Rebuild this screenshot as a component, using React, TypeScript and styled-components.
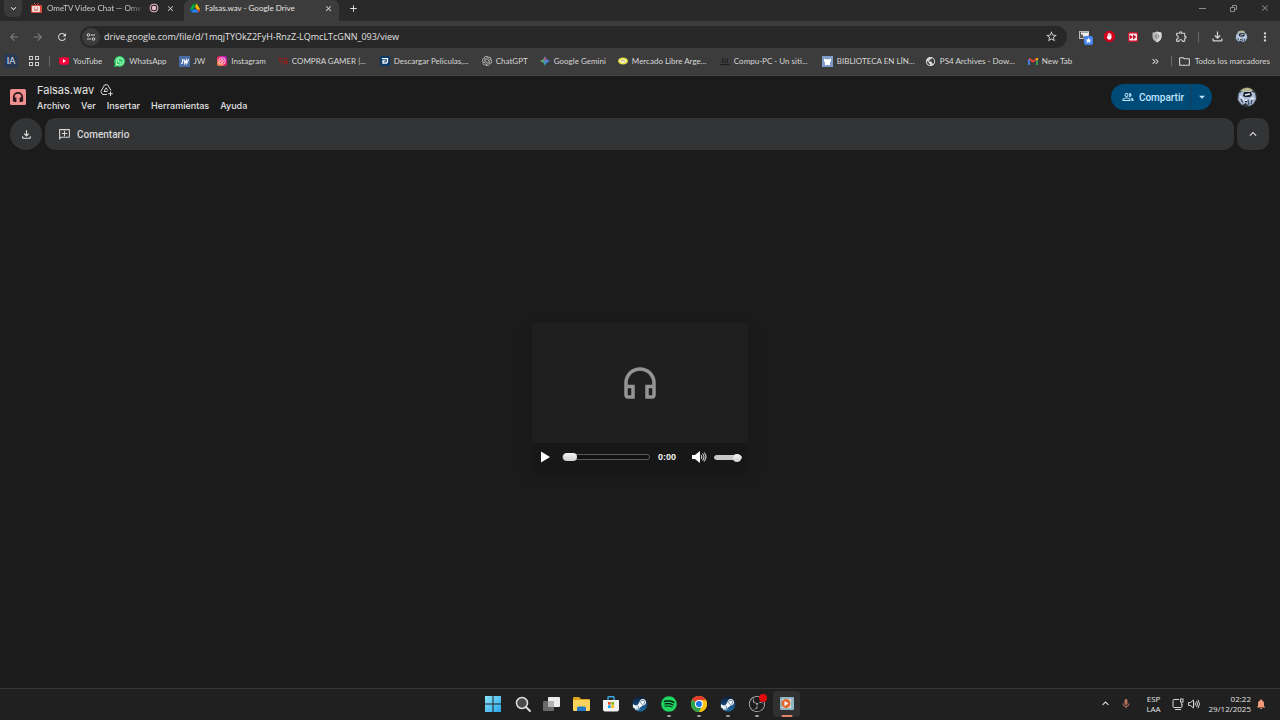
import React from "react";
import styled, { createGlobalStyle } from "styled-components";
import {
  MdArrowBack,
  MdArrowForward,
  MdArrowDropDown,
  MdClose,
  MdExpandLess,
  MdExpandMore,
  MdOutlineAddComment,
  MdOutlineExtension,
  MdOutlineFileDownload,
  MdOutlineFolder,
  MdOutlineHeadphones,
  MdOutlinePeopleAlt,
  MdMoreVert,
  MdRefresh,
  MdStarBorder,
  MdPublic,
  MdAdd,
  MdNotifications,
  MdKeyboardDoubleArrowRight,
  MdOutlineMic,
} from "react-icons/md";
import { FaSteamSymbol, FaSpotify, FaWhatsapp } from "react-icons/fa6";
import { SiOpenai, SiObsstudio } from "react-icons/si";

const chromeFont = `Lato, "Open Sans", sans-serif`;
const addressFont = `"Open Sans", "Noto Sans", sans-serif`;
const driveFont = `Roboto, Inter, sans-serif`;

const GlobalStyle = createGlobalStyle`
  * { box-sizing: border-box; }
  body { margin: 0; background: #1b1b1b; font-family: ${chromeFont}; }
  button { border: 0; padding: 0; background: none; color: inherit; font: inherit; cursor: pointer; }
  a { color: inherit; text-decoration: none; }
  svg { display: block; flex: none; }
`;

const Screen = styled.div`
  display: flex;
  flex-direction: column;
  min-height: 100vh;
  color: #e3e3e3;
`;

/* Browser frame */
const TabStrip = styled.div`
  display: flex;
  align-items: flex-start;
  height: 21px;
  background: #292929;
`;
const TabSearch = styled.button`
  display: grid;
  place-items: center;
  width: 18px;
  height: 17px;
  margin: 0 7px 0 4px;
  border-radius: 0 0 6px 6px;
  background: #3a3a3a;
`;
const Tab = styled.div<{ $active?: boolean }>`
  display: flex;
  align-items: center;
  gap: 5px;
  width: 155px;
  height: 21px;
  padding: ${(p) => (p.$active ? "0 5px 5px 6px" : "0 8px 5px 2px")};
  border-radius: 6px 6px 0 0;
  background: ${(p) => (p.$active ? "#3c3c3c" : "transparent")};
  color: ${(p) => (p.$active ? "#e4e4e4" : "#cccccc")};
  font-size: 8px;
  line-height: 16px;
`;
const TabTitle = styled.span<{ $fade?: boolean }>`
  flex: 1;
  white-space: nowrap;
  ${(p) => p.$fade && "mask-image: linear-gradient(90deg, #000 84%, transparent);"}
`;
const TabButton = styled.button`
  display: grid;
  place-items: center;
  width: 12px;
  height: 16px;
`;
const NewTab = styled(TabButton)`
  width: 28px;
`;
const WindowButtons = styled.div`
  display: flex;
  margin-left: auto;
  color: #8c8c8c;
`;
const WindowButton = styled(TabButton)`
  width: 31px;
`;

const Toolbar = styled.div`
  display: flex;
  align-items: center;
  height: 31px;
  padding: 0 3px 0 2px;
  background: #3c3c3c;
`;
const ToolButton = styled.button<{ $dim?: boolean }>`
  display: grid;
  place-items: center;
  width: 24px;
  height: 24px;
  color: ${(p) => (p.$dim ? "#808080" : "#d2d2d2")};
`;
const AddressBar = styled.div`
  display: flex;
  flex: 1;
  align-items: center;
  height: 22px;
  margin: 0 6px;
  padding: 0 4px 0 2px;
  border-radius: 11px;
  background: #282828;
`;
const SiteInfo = styled.button`
  display: grid;
  place-items: center;
  width: 18px;
  height: 18px;
  border-radius: 9px;
  background: #3c3c3c;
`;
const AddressInput = styled.input`
  flex: 1;
  min-width: 0;
  padding: 0 0 0 4px;
  border: 0;
  outline: 0;
  background: none;
  color: #e0e0e0;
  font-family: ${addressFont};
  font-size: 9px;
  line-height: 16px;
`;
const Separator = styled.span`
  width: 1px;
  height: 10px;
  margin: 0 6px 0 5px;
  background: #6a6a6a;
`;

const BookmarksBar = styled.nav`
  display: flex;
  align-items: center;
  height: 24px;
  padding: 0 10px 5px 4px;
  border-bottom: 1px solid #444444;
  background: #3c3c3c;
  color: #d8d8d8;
  font-size: 8px;
  line-height: 14px;
`;
const AiBadge = styled.a`
  width: 14px;
  border-radius: 3px;
  background: #2b3950;
  color: #d6e6ff;
  font-size: 9px;
  text-align: center;
`;
const AppsButton = styled.button`
  margin: 0 5px 0 11px;
`;
const Bookmarks = styled.div`
  display: flex;
  gap: 12px;
  margin-left: 3px;
`;
const Bookmark = styled.a`
  display: flex;
  align-items: center;
  gap: 4px;
  white-space: nowrap;
`;
const BookmarkLabel = styled.span<{ $cut?: boolean }>`
  width: ${(p) => (p.$cut ? "76px" : "auto")};
`;
const BookmarksEnd = styled.div`
  display: flex;
  align-items: center;
  margin-left: auto;
`;
const OverflowButton = styled.button`
  margin-right: 5px;
`;

/* Drive viewer */
const Viewer = styled.main`
  display: flex;
  flex: 1;
  flex-direction: column;
  background: #1b1b1b;
  font-family: ${driveFont};
`;
const Header = styled.header`
  display: flex;
  align-items: center;
  height: 42px;
  padding: 0 23px 0 10px;
`;
const TitleBlock = styled.div`
  padding-top: 2px;
  margin-left: 11px;
`;
const TitleRow = styled.div`
  display: flex;
  align-items: center;
  gap: 6px;
  height: 16px;
`;
const Title = styled.h1`
  margin: 0;
  color: #e6e6e6;
  font-family: Inter, sans-serif;
  font-size: 11px;
  font-weight: 400;
  line-height: 16px;
`;
const Menu = styled.nav`
  display: flex;
  gap: 11px;
  height: 16px;
`;
const MenuItem = styled.button`
  color: #e3e3e3;
  font-family: Inter, sans-serif;
  font-size: 9px;
  font-weight: 500;
  line-height: 16px;
`;
const Share = styled.div`
  display: flex;
  height: 26px;
  margin-left: auto;
  margin-right: 25px;
  border-radius: 13px;
  overflow: hidden;
  background: #004a77;
  color: #c2e7ff;
`;
const ShareMain = styled.button`
  display: flex;
  align-items: center;
  gap: 5px;
  padding: 0 6px 0 11px;
  font-size: 10px;
  font-weight: 500;
`;
const ShareMore = styled.button`
  display: grid;
  place-items: center;
  width: 22px;
  border-left: 1px solid #1b3c54;
`;
const ActionRow = styled.div`
  display: flex;
  gap: 3px;
  padding: 0 11px 0 10px;
`;
const RoundAction = styled.button<{ $radius: number }>`
  display: grid;
  place-items: center;
  width: 32px;
  height: 32px;
  border-radius: ${(p) => p.$radius}px;
  background: #333436;
`;
const ActionBar = styled.div`
  display: flex;
  flex: 1;
  height: 32px;
  padding: 0 13px;
  border-radius: 10px;
  background: #333436;
`;
const CommentButton = styled.button`
  display: flex;
  align-items: center;
  gap: 6px;
  color: #d6d6d6;
  font-size: 10px;
  font-weight: 500;
`;
const Flip = styled.span`
  transform: scaleX(-1);
`;
const Stage = styled.section`
  display: grid;
  flex: 1;
  place-items: center;
  padding-bottom: 44px;
`;
const Player = styled.div`
  width: 216px;
  box-shadow: 0 4px 10px #171717;
`;
const Cover = styled.div`
  display: grid;
  place-items: center;
  height: 120px;
  background: #1f1f1f;
  color: #949494;
`;
const Controls = styled.div`
  display: flex;
  align-items: center;
  height: 28px;
  padding: 0 6px 0 8px;
  background: #171717;
  color: #f2f2f2;
`;
const PlayButton = styled.button`
  margin-right: 12px;
`;
const Slider = styled.input<{ $kind: "seek" | "volume" }>`
  appearance: none;
  width: ${(p) => (p.$kind === "seek" ? 88 : 28)}px;
  height: 10px;
  margin: 0;
  background: none;
  &::-webkit-slider-runnable-track {
    height: ${(p) => (p.$kind === "seek" ? 6 : 5)}px;
    border: 1px solid ${(p) => (p.$kind === "seek" ? "#5c5c5c" : "#c8c8c8")};
    border-radius: 3px;
    background: ${(p) => (p.$kind === "seek" ? "#101010" : "#c8c8c8")};
  }
  &::-webkit-slider-thumb {
    appearance: none;
    width: ${(p) => (p.$kind === "seek" ? 14 : 8)}px;
    height: 8px;
    margin-top: -2px;
    border-radius: 4px;
    background: linear-gradient(#f4f4f4, #cfcfcf);
  }
`;
const Time = styled.time`
  flex: 1;
  margin-left: 8px;
  font-family: "Liberation Sans", sans-serif;
  font-size: 9px;
  font-weight: 700;
`;
const MuteButton = styled.button`
  margin-right: 7px;
`;

/* Windows taskbar */
const Taskbar = styled.footer`
  display: grid;
  grid-template-columns: 1fr 323px 1fr;
  height: 32px;
  border-top: 1px solid #363636;
  background: #202020;
`;
const Apps = styled.div`
  display: grid;
  grid-column: 2;
  grid-template-columns: repeat(11, 1fr);
  justify-items: center;
  align-items: start;
  padding-top: 2px;
`;
const AppButton = styled.button<{ $active?: boolean }>`
  position: relative;
  display: grid;
  place-items: center;
  width: 27px;
  height: 26px;
  border-radius: 3px;
  background: ${(p) => (p.$active ? "#303030" : "transparent")};
`;
const Running = styled.span<{ $active?: boolean }>`
  position: absolute;
  bottom: 0;
  left: 50%;
  width: ${(p) => (p.$active ? 11 : 4)}px;
  height: 2px;
  border-radius: 1px;
  transform: translateX(-50%);
  background: ${(p) => (p.$active ? "#e8836a" : "#9a9a9a")};
`;
const Tray = styled.div`
  display: flex;
  align-items: center;
  justify-content: flex-end;
  padding: 0 13px 2px 0;
  font-family: ${addressFont};
  font-size: 8px;
  line-height: 10px;
`;
const TrayIcon = styled.button`
  display: grid;
  place-items: center;
  width: 20px;
  height: 24px;
`;
const TrayGroup = styled.div`
  display: flex;
  gap: 4px;
`;
const Language = styled.button`
  width: 36px;
  text-align: center;
`;
const Clock = styled.button`
  margin: 0 4px 0 9px;
  text-align: right;
`;

/* Icons */
const Camera = () => (
  <svg width="11" height="11" viewBox="0 0 11 11">
    <rect x="0" y="2" width="11" height="8" rx="1" fill="#d9483f" />
    <path d="M3 0l2 2M8 0L6 2" stroke="#d9483f" />
    <rect x="1" y="3" width="8" height="6" rx="1" fill="#f4dcd6" />
    <path d="M3 5h1M6 5h1M3 7h4" stroke="#b8574c" />
  </svg>
);
const DriveLogo = () => (
  <svg width="10" height="10" viewBox="0 0 87 78">
    <path d="M6.6 66.85l3.85 6.65c.8 1.4 1.95 2.5 3.3 3.3L27.5 53H0c0 1.55.4 3.1 1.2 4.5z" fill="#0066da" />
    <path d="M43.65 25L29.9 1.2c-1.35.8-2.5 1.9-3.3 3.3L1.2 48.5A9 9 0 000 53h27.5z" fill="#00ac47" />
    <path d="M73.55 76.8c1.35-.8 2.5-1.9 3.3-3.3l9.25-16c.8-1.4 1.2-2.95 1.2-4.5H59.8l5.85 11.5z" fill="#ea4335" />
    <path d="M43.65 25L57.4 1.2C56.05.4 54.5 0 52.9 0H34.4c-1.6 0-3.15.45-4.5 1.2z" fill="#00832d" />
    <path d="M59.8 53H27.5L13.75 76.8c1.35.8 2.9 1.2 4.5 1.2h50.8c1.6 0 3.15-.45 4.5-1.2z" fill="#2684fc" />
    <path d="M73.4 26.5L60.7 4.5c-.8-1.4-1.95-2.5-3.3-3.3L43.65 25 59.8 53h27.45c0-1.55-.4-3.1-1.2-4.5z" fill="#ffba00" />
  </svg>
);
const AddToDrive = () => (
  <svg width="13" height="12" viewBox="0 0 13 12" fill="none" stroke="#d8d8d8" strokeLinejoin="round">
    <path d="M7 10.500H2.500L.8 7.500 4.600.8h3L11 6.500" />
    <path d="M7.500 7.500H4L6.100 3.800 7.800 6.500" />
    <path d="M10.500 7.500v4.500M8.200 9.700h4.600" />
  </svg>
);
const Recording = () => (
  <svg width="10" height="10" viewBox="0 0 10 10">
    <circle cx="5" cy="5" r="4" fill="none" stroke="#e6b8c4" />
    <circle cx="5" cy="5" r="2.3" fill="#e6b8c4" />
  </svg>
);
const Tune = () => (
  <svg width="10" height="10" viewBox="0 0 10 10" fill="none" stroke="#d8d8d8">
    <circle cx="2.5" cy="3" r="1.3" />
    <path d="M5 3h4M1 7h4" />
    <circle cx="7.5" cy="7" r="1.3" />
  </svg>
);
const AppsGrid = () => (
  <svg width="10" height="10" viewBox="0 0 10 10" fill="none" stroke="#cfcfcf">
    <rect x=".5" y=".5" width="3" height="3" />
    <rect x="6.5" y=".5" width="3" height="3" />
    <rect x=".5" y="6.5" width="3" height="3" />
    <rect x="6.5" y="6.5" width="3" height="3" />
  </svg>
);
const YouTube = () => (
  <svg width="10" height="10" viewBox="0 0 10 10">
    <rect y="1.3" width="10" height="7.4" rx="2" fill="#f5033a" />
    <path d="M4 3.3v3.4L7 5z" fill="#fff" />
  </svg>
);
const WhatsApp = () => (
  <svg width="11" height="11" viewBox="0 0 11 11">
    <path d="M5.6 0a5.4 5.4 0 11-2.5 10.2L0 11l.9-3A5.4 5.4 0 015.6 0z" fill="#2bd366" />
    <FaWhatsapp x="1.2" y="1" size={9} color="#fff" />
  </svg>
);
const JW = () => (
  <svg width="11" height="11" viewBox="0 0 11 11">
    <rect width="11" height="11" fill="#4a6da7" />
    <path d="M3.6 3v3.5q0 1-1.6 1M5 3l.8 4.5L7.3 4l.5 3.500L9.600 3" fill="none" stroke="#fff" strokeWidth="1.1" />
  </svg>
);
const Instagram = () => (
  <svg width="10" height="10" viewBox="0 0 10 10">
    <defs>
      <linearGradient id="ig" x1="0" y1="1" x2="1" y2="0">
        <stop offset="0" stopColor="#ffc03a" />
        <stop offset=".45" stopColor="#f2215f" />
        <stop offset="1" stopColor="#b01be0" />
      </linearGradient>
    </defs>
    <rect width="10" height="10" rx="2.5" fill="url(#ig)" />
    <rect x="2" y="2" width="6" height="6" rx="1.800" fill="none" stroke="#fff" strokeWidth=".8" />
    <circle cx="5" cy="5" r="1.4" fill="none" stroke="#fff" strokeWidth=".8" />
  </svg>
);
const CompraGamer = () => (
  <svg width="10" height="10" viewBox="0 0 10 10" fill="none" stroke="#8e2323" strokeWidth="1.3">
    <path d="M0 2l3 1 2-1M1 4l2 2h2M9.500 3H6.500v4.500H9V5.500H7.500" />
  </svg>
);
const Download = () => (
  <svg width="10" height="10" viewBox="0 0 10 10">
    <rect width="10" height="10" rx="1" fill="#0b3a68" />
    <path d="M2 2.700h5.500V5q0 2.200-2.500 2.200H3V4.800h2.500" fill="none" stroke="#fff" strokeWidth="1.3" />
  </svg>
);
const Gemini = () => (
  <svg width="10" height="10" viewBox="0 0 10 10">
    <defs>
      <linearGradient id="gem" x1="0" y1=".6" x2="1" y2=".4">
        <stop offset="0" stopColor="#f5c531" />
        <stop offset=".3" stopColor="#3fae6c" />
        <stop offset=".55" stopColor="#4285f4" />
        <stop offset="1" stopColor="#4a8cf7" />
      </linearGradient>
    </defs>
    <path d="M5 0Q6 4 10 5 6 6 5 10 4 6 0 5 4 4 5 0z" fill="url(#gem)" />
    <path d="M5 0Q5.500 3 7 4L5 5 3.500 3.800Q4.700 2.500 5 0z" fill="#e8453c" opacity=".7" />
  </svg>
);
const Mercado = () => (
  <svg width="10" height="10" viewBox="0 0 10 10">
    <ellipse cx="5" cy="5" rx="5" ry="3.500" fill="#e9e04a" />
    <path d="M1.500 4.500Q5 2.500 8.500 4.500 7 7 5 7T1.500 4.500z" fill="#f6f3dc" />
    <path d="M3 5l2-.7 2 1" fill="none" stroke="#8a8a5a" strokeWidth=".6" />
  </svg>
);
const CompuPc = () => (
  <svg width="10" height="10" viewBox="0 0 10 10" fill="none" stroke="#1c1c1c">
    <path d="M2.500 2v4h5V3M0 8.500h9.500M4 4l3-2" />
  </svg>
);
const Biblioteca = () => (
  <svg width="11" height="11" viewBox="0 0 11 11">
    <rect width="11" height="11" fill="#7f9ccb" />
    <path d="M2 2.500l2 .7h3l2-.7v3L8 6v3H3V6L2 5.500z" fill="#fff" />
  </svg>
);
const Gmail = () => (
  <svg width="10" height="10" viewBox="0 0 10 10" fill="none" strokeWidth="1.800">
    <path d="M1 9V3" stroke="#4285f4" />
    <path d="M9 9V3" stroke="#34a853" />
    <path d="M1 2.500l4 3.200 4-3.200" stroke="#ea4335" />
    <path d="M9 2v2" stroke="#fbbc04" />
  </svg>
);
const WindowExt = () => (
  <svg width="16" height="16" viewBox="0 0 16 16">
    <rect x="2.500" y="2.500" width="9" height="7" fill="#5a5a5a" stroke="#bdbdbd" />
    <path d="M4 4.500h8M6 6.500h5" stroke="#f0f0f0" strokeWidth="2" />
    <rect x="7" y="7" width="9" height="9" rx="2" fill="#4684ee" />
    <path d="M11.500 8.500l.9 2 2.100.2-1.600 1.400.5 2.100-1.900-1.100-1.900 1.100.5-2.100-1.600-1.400 2.100-.2z" fill="#fff" />
  </svg>
);
const HandExt = () => (
  <svg width="11" height="11" viewBox="0 0 12 12">
    <path d="M3.500 0h5L12 3.500v5L8.500 12h-5L0 8.500v-5z" fill="#d0021b" />
    <path d="M4.500 6V3.500M5.500 6V2.500M6.500 6V2.700M7.500 7V3.700" stroke="#fff" strokeLinecap="round" />
    <path d="M4 5.500h4v2Q8 9.500 6 9.500 4.300 9.300 3 7z" fill="#fff" />
  </svg>
);
const SkipExt = () => (
  <svg width="10" height="10" viewBox="0 0 10 10">
    <rect width="10" height="10" rx="1.500" fill="#c9152f" />
    <rect x="1" y="1.500" width="8" height="7" rx="1" fill="#f4e9ea" />
    <path d="M1.500 2.500L5 5 1.500 7.500zM5 2.500L8.500 5 5 7.500z" fill="#c9152f" />
  </svg>
);
const ShieldExt = () => (
  <svg width="10" height="12" viewBox="0 0 10 12">
    <path d="M5 .5l4.500 1.300v4Q9.300 9.500 5 11.500.7 9.500.5 5.800v-4z" fill="#b9b9b9" />
    <path d="M5 .5l4.500 1.300v4Q9.300 9.500 5 11.500z" fill="#d8d8d8" />
    <circle cx="5" cy="5.500" r="2.200" fill="#8c8c8c" />
    <path d="M4.500 4.500h1v2h-1" stroke="#ddd" strokeWidth=".7" fill="none" />
  </svg>
);
const Avatar = ({ size }: { size: number }) => (
  <svg width={size} height={size} viewBox="0 0 20 20">
    <circle cx="10" cy="10" r="10" fill="#343a3d" />
    <path d="M3 4Q9-2 16 3l-2 2H6z" fill="#b5b68a" />
    <path d="M2 6l5-2h6l5 2 1 6-3 5-4 2-3-3-4 2-4-5z" fill="#a9bbd6" />
    <path d="M7 5h7l1 3-2 2H8L6 9z" fill="#1b1f26" />
    <path d="M8 8l5-1M3 9l4 4M13 12l4-1M6 15l3-2 3 2" stroke="#e4edf8" strokeWidth="1.400" />
    <path d="M11 13l1 5M4 12l2 4M15 13l-1 4" stroke="#3b4a63" strokeWidth="1.300" />
  </svg>
);
const AudioFile = () => (
  <svg width="16" height="16" viewBox="0 0 16 16">
    <rect width="16" height="16" rx="1.500" fill="#ee8f90" />
    <path d="M3.800 12.500V8a4.200 4.200 0 018.400 0v4.500M3.800 9.500h1.700v2.500H4.200M12.200 9.500h-1.700v2.500h1.300" fill="none" stroke="#2a1718" strokeWidth="1.800" />
  </svg>
);
const PlayIcon = () => (
  <svg width="10" height="12" viewBox="0 0 10 12">
    <path d="M1 .5L10 6 1 11.500z" fill="#fff" />
  </svg>
);
const Speaker = () => (
  <svg width="15" height="12" viewBox="0 0 15 12">
    <path d="M0 4h3l5-4v12L3 8H0z" fill="#fff" />
    <path d="M9 4q1.500 2 0 4M10.500 2.500q3 3.500 0 7M12 1.500q4 4.500 0 9" fill="none" stroke="#d0d0d0" strokeWidth="1.100" />
  </svg>
);

const WindowsLogo = () => (
  <svg width="16" height="16" viewBox="0 0 16 16">
    <defs>
      <linearGradient id="win" x1="0" y1="0" x2="1" y2="1">
        <stop offset="0" stopColor="#8be4fb" />
        <stop offset="1" stopColor="#2aa5e8" />
      </linearGradient>
    </defs>
    <path d="M0 0h7.500v7.500H0zM8.500 0H16v7.500H8.500zM0 8.500h7.500V16H0zM8.500 8.500H16V16H8.500z" fill="url(#win)" />
  </svg>
);
const SearchIcon = () => (
  <svg width="16" height="16" viewBox="0 0 16 16">
    <circle cx="7" cy="7" r="5.500" fill="#4a4a4a" stroke="#e2e2e2" strokeWidth="1.500" />
    <path d="M11 11l4 4" stroke="#e2e2e2" strokeWidth="1.800" strokeLinecap="round" />
  </svg>
);
const TaskView = () => (
  <svg width="17" height="16" viewBox="0 0 17 16">
    <rect x="0" y="5" width="11" height="10" rx="1" fill="#6a6a6a" />
    <rect x="5" y="1" width="12" height="10" rx="1" fill="#ededed" />
    <rect x="5" y="5" width="6" height="6" fill="#b4b4b4" />
  </svg>
);
const Explorer = () => (
  <svg width="17" height="16" viewBox="0 0 17 16">
    <path d="M0 2q0-1 1-1h5l2 2h8q1 0 1 1v5H0z" fill="#dfa520" />
    <rect y="4" width="17" height="11" rx="1" fill="#fbd25c" />
    <path d="M4 15v-3q0-1.500 1.500-1.500h6Q13 10.500 13 12v3z" fill="#1f78c8" />
  </svg>
);
const Store = () => (
  <svg width="16" height="16" viewBox="0 0 16 16">
    <path d="M5 4V1.500Q5 .8 5.800.8h4.400q.8 0 .8.700V4" fill="none" stroke="#39a8e0" strokeWidth="1.400" />
    <path d="M0 4h16v9.500q0 2-2 2H2q-2 0-2-2z" fill="#f3f3f3" />
    <path d="M5 6h2.700v2.700H5z" fill="#f25022" />
    <path d="M8.300 6H11v2.700H8.300z" fill="#7fba00" />
    <path d="M5 9.300h2.700V12H5z" fill="#00a4ef" />
    <path d="M8.300 9.300H11V12H8.300z" fill="#ffb900" />
  </svg>
);
const Steam = () => (
  <svg width="16" height="16" viewBox="0 0 16 16">
    <defs>
      <linearGradient id="steam" x1="0" y1="0" x2="0" y2="1">
        <stop offset="0" stopColor="#101d3c" />
        <stop offset="1" stopColor="#1b6fa8" />
      </linearGradient>
    </defs>
    <circle cx="8" cy="8" r="7.500" fill="url(#steam)" />
    <FaSteamSymbol x="0" y="1" size={15} color="#f2f5f8" />
  </svg>
);
const Spotify = () => (
  <svg width="16" height="16" viewBox="0 0 16 16">
    <circle cx="8" cy="8" r="7" fill="#0c1a10" />
    <FaSpotify size={16} color="#1fd760" />
  </svg>
);
const Chrome = () => (
  <svg width="16" height="16" viewBox="0 0 16 16">
    <circle cx="8" cy="8" r="8" fill="#fbc116" />
    <path d="M8 8L1.070 4A8 8 0 0114.930 4z" fill="#e33b2e" />
    <path d="M1.070 4A8 8 0 008 16l3.500-6L8 8z" fill="#2ba24c" />
    <path d="M8 4h6.930A8 8 0 018 16l3.500-6z" fill="#fbc116" />
    <circle cx="8" cy="8" r="4" fill="#fff" />
    <circle cx="8" cy="8" r="3" fill="#1a73e8" />
  </svg>
);
const Obs = () => (
  <svg width="20" height="20" viewBox="0 0 20 20">
    <circle cx="10" cy="10" r="7" fill="#1d1d1f" />
    <SiObsstudio x="2" y="2" size={16} color="#c8c8c8" />
    <circle cx="16" cy="4" r="4" fill="#e00b0b" />
  </svg>
);
const MediaPlayer = () => (
  <svg width="14" height="14" viewBox="0 0 14 14">
    <rect width="14" height="13" rx="1" fill="#8fb6c4" />
    <rect x="2" y="2" width="9" height="9" fill="#d7dfe0" />
    <circle cx="6" cy="6.500" r="4.500" fill="#e0682c" />
    <path d="M4.500 4v5l4-2.500z" fill="#fff" />
  </svg>
);
const Network = () => (
  <svg width="12" height="12" viewBox="0 0 12 12" fill="none" stroke="#d6d6d6">
    <path d="M7 1.500H2Q1 1.500 1 2.500v6q0 1 1 1h7q1 0 1-1V6M3 11.500h6" />
    <rect x="8.500" y="1" width="2.500" height="3" />
    <path d="M9.700 4.500V7" />
  </svg>
);
const TrayVolume = () => (
  <svg width="12" height="12" viewBox="0 0 12 12" fill="none" stroke="#d6d6d6">
    <path d="M.6 4.500h2L5.500 2v8L2.600 7.500h-2zM7 4.500q1 1.500 0 3M8.500 3q2 3 0 6M10 1.800q3 4.200 0 8.400" />
  </svg>
);
const Minimize = () => (
  <svg width="7" height="7" viewBox="0 0 7 7" stroke="currentColor"><path d="M0 3.500h7" /></svg>
);
const Restore = () => (
  <svg width="7" height="7" viewBox="0 0 7 7" fill="none" stroke="currentColor">
    <path d="M.5 2.500h4v4h-4zM2.500 2V.5h4v4H5" />
  </svg>
);

const bookmarks: { label: string; icon: React.ReactNode; cut?: boolean }[] = [
  { label: "YouTube", icon: <YouTube /> },
  { label: "WhatsApp", icon: <WhatsApp /> },
  { label: "JW", icon: <JW /> },
  { label: "Instagram", icon: <Instagram /> },
  { label: "COMPRA GAMER |...", icon: <CompraGamer />, cut: true },
  { label: "Descargar Peliculas,...", icon: <Download />, cut: true },
  { label: "ChatGPT", icon: <SiOpenai size={10} color="#c4c4c4" /> },
  { label: "Google Gemini", icon: <Gemini /> },
  { label: "Mercado Libre Arge...", icon: <Mercado />, cut: true },
  { label: "Compu-PC - Un siti...", icon: <CompuPc />, cut: true },
  { label: "BIBLIOTECA EN LÍN...", icon: <Biblioteca />, cut: true },
  { label: "PS4 Archives - Dow...", icon: <MdPublic size={11} color="#d8d8d8" />, cut: true },
  { label: "New Tab", icon: <Gmail /> },
];

const taskbarApps: { name: string; icon: React.ReactNode; running?: boolean; active?: boolean }[] = [
  { name: "Inicio", icon: <WindowsLogo /> },
  { name: "Buscar", icon: <SearchIcon /> },
  { name: "Vista de tareas", icon: <TaskView /> },
  { name: "Explorador de archivos", icon: <Explorer /> },
  { name: "Microsoft Store", icon: <Store /> },
  { name: "Steam", icon: <Steam /> },
  { name: "Spotify", icon: <Spotify />, running: true },
  { name: "Google Chrome", icon: <Chrome />, running: true },
  { name: "Steam", icon: <Steam />, running: true },
  { name: "OBS Studio", icon: <Obs />, running: true },
  { name: "Reproductor", icon: <MediaPlayer />, running: true, active: true },
];

const menuItems = ["Archivo", "Ver", "Insertar", "Herramientas", "Ayuda"];

export default function App() {
  return (
    <Screen>
      <GlobalStyle />
      <TabStrip>
        <TabSearch aria-label="Buscar pestañas"><MdExpandMore size={11} /></TabSearch>
        <Tab>
          <Camera />
          <TabTitle $fade>OmeTV Video Chat — Ome</TabTitle>
          <Recording />
          <TabButton aria-label="Cerrar pestaña"><MdClose size={9} /></TabButton>
        </Tab>
        <Tab $active>
          <DriveLogo />
          <TabTitle>Falsas.wav - Google Drive</TabTitle>
          <TabButton aria-label="Cerrar pestaña"><MdClose size={9} /></TabButton>
        </Tab>
        <NewTab aria-label="Nueva pestaña"><MdAdd size={11} /></NewTab>
        <WindowButtons>
          <WindowButton aria-label="Minimizar"><Minimize /></WindowButton>
          <WindowButton aria-label="Restaurar"><Restore /></WindowButton>
          <WindowButton aria-label="Cerrar"><MdClose size={10} /></WindowButton>
        </WindowButtons>
      </TabStrip>

      <Toolbar>
        <ToolButton $dim aria-label="Atrás"><MdArrowBack size={12} /></ToolButton>
        <ToolButton $dim aria-label="Adelante"><MdArrowForward size={12} /></ToolButton>
        <ToolButton aria-label="Recargar"><MdRefresh size={12} /></ToolButton>
        <AddressBar>
          <SiteInfo aria-label="Información del sitio"><Tune /></SiteInfo>
          <AddressInput
            aria-label="Dirección"
            defaultValue="drive.google.com/file/d/1mqjTYOkZ2FyH-RnzZ-LQmcLTcGNN_093/view"
          />
          <ToolButton aria-label="Agregar a marcadores"><MdStarBorder size={13} /></ToolButton>
        </AddressBar>
        <ToolButton aria-label="Marcadores rápidos"><WindowExt /></ToolButton>
        <ToolButton aria-label="Bloqueador"><HandExt /></ToolButton>
        <ToolButton aria-label="Saltar"><SkipExt /></ToolButton>
        <ToolButton aria-label="Escudo"><ShieldExt /></ToolButton>
        <ToolButton aria-label="Extensiones"><MdOutlineExtension size={13} /></ToolButton>
        <Separator />
        <ToolButton aria-label="Descargas"><MdOutlineFileDownload size={15} /></ToolButton>
        <ToolButton aria-label="Perfil"><Avatar size={13} /></ToolButton>
        <ToolButton aria-label="Más"><MdMoreVert size={14} /></ToolButton>
      </Toolbar>

      <BookmarksBar>
        <AiBadge href="#ia">IA</AiBadge>
        <AppsButton aria-label="Aplicaciones"><AppsGrid /></AppsButton>
        <Separator />
        <Bookmarks>
          {bookmarks.map((b) => (
            <Bookmark key={b.label} href="#marcador">
              {b.icon}
              <BookmarkLabel $cut={b.cut}>{b.label}</BookmarkLabel>
            </Bookmark>
          ))}
        </Bookmarks>
        <BookmarksEnd>
          <OverflowButton aria-label="Más marcadores"><MdKeyboardDoubleArrowRight size={11} /></OverflowButton>
          <Separator />
          <Bookmark href="#todos">
            <MdOutlineFolder size={13} />
            <BookmarkLabel>Todos los marcadores</BookmarkLabel>
          </Bookmark>
        </BookmarksEnd>
      </BookmarksBar>

      <Viewer>
        <Header>
          <AudioFile />
          <TitleBlock>
            <TitleRow>
              <Title>Falsas.wav</Title>
              <AddToDrive />
            </TitleRow>
            <Menu>
              {menuItems.map((m) => <MenuItem key={m}>{m}</MenuItem>)}
            </Menu>
          </TitleBlock>
          <Share>
            <ShareMain><MdOutlinePeopleAlt size={12} />Compartir</ShareMain>
            <ShareMore aria-label="Opciones para compartir"><MdArrowDropDown size={14} /></ShareMore>
          </Share>
          <button aria-label="Cuenta"><Avatar size={20} /></button>
        </Header>
        <ActionRow>
          <RoundAction $radius={16} aria-label="Descargar"><MdOutlineFileDownload size={13} /></RoundAction>
          <ActionBar>
            <CommentButton>
              <Flip><MdOutlineAddComment size={13} /></Flip>
              Comentario
            </CommentButton>
          </ActionBar>
          <RoundAction $radius={10} aria-label="Ocultar controles"><MdExpandLess size={14} /></RoundAction>
        </ActionRow>
        <Stage>
          <Player>
            <Cover><MdOutlineHeadphones size={42} /></Cover>
            <Controls>
              <PlayButton aria-label="Reproducir"><PlayIcon /></PlayButton>
              <Slider $kind="seek" type="range" aria-label="Posición" defaultValue={0} />
              <Time>0:00</Time>
              <MuteButton aria-label="Silenciar"><Speaker /></MuteButton>
              <Slider $kind="volume" type="range" aria-label="Volumen" defaultValue={100} />
            </Controls>
          </Player>
        </Stage>
      </Viewer>

      <Taskbar>
        <Apps>
          {taskbarApps.map((a, i) => (
            <AppButton key={i} $active={a.active} aria-label={a.name}>
              {a.icon}
              {a.running && <Running $active={a.active} />}
            </AppButton>
          ))}
        </Apps>
        <Tray>
          <TrayIcon aria-label="Iconos ocultos"><MdExpandLess size={13} /></TrayIcon>
          <TrayIcon aria-label="Micrófono"><MdOutlineMic size={12} color="#b5705c" /></TrayIcon>
          <Language>ESP<br />LAA</Language>
          <TrayGroup>
            <Network />
            <TrayVolume />
          </TrayGroup>
          <Clock>02:22<br />29/12/2025</Clock>
          <MdNotifications size={12} color="#f09a7a" />
        </Tray>
      </Taskbar>
    </Screen>
  );
}
